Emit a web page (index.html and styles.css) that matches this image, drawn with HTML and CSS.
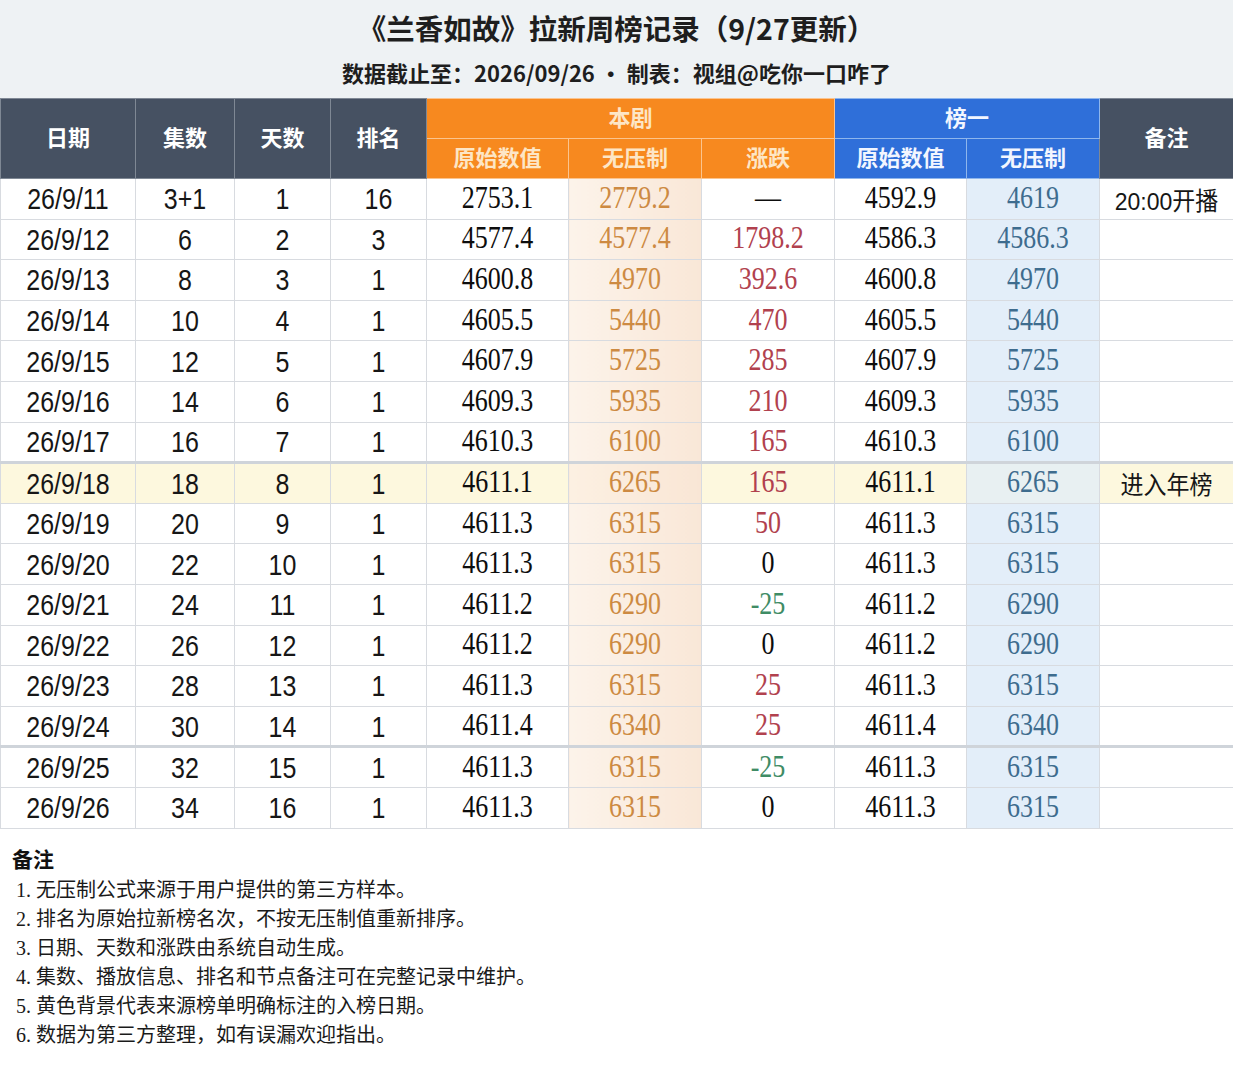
FILE: index.html
```html
<!DOCTYPE html>
<html lang="zh">
<head>
<meta charset="utf-8">
<link rel="stylesheet" href="styles.css">
</head>
<body>
<div class="page">
  <header class="head">
    <h1 class="title">《兰香如故》拉新周榜记录（9/27更新）</h1>
    <p class="sub">数据截止至：2026/09/26 · 制表：视组@吃你一口咋了</p>
  </header>
  <table class="grid">
    <colgroup>
      <col class="c-date"><col class="c-ep"><col class="c-day"><col class="c-rank">
      <col class="c-raw"><col class="c-unc"><col class="c-chg">
      <col class="c-raw2"><col class="c-unc2"><col class="c-note">
    </colgroup>
    <thead>
      <tr class="h1">
        <th rowspan="2" class="dark">日期</th>
        <th rowspan="2" class="dark">集数</th>
        <th rowspan="2" class="dark">天数</th>
        <th rowspan="2" class="dark">排名</th>
        <th colspan="3" class="orange">本剧</th>
        <th colspan="2" class="blue">榜一</th>
        <th rowspan="2" class="dark">备注</th>
      </tr>
      <tr class="h2">
        <th class="orange">原始数值</th>
        <th class="orange">无压制</th>
        <th class="orange">涨跌</th>
        <th class="blue">原始数值</th>
        <th class="blue">无压制</th>
      </tr>
    </thead>
    <tbody>
      <tr><td class="s"><span>26/9/11</span></td><td class="s"><span>3+1</span></td><td class="s"><span>1</span></td><td class="s"><span>16</span></td><td class="n"><span>2753.1</span></td><td class="n uo"><span>2779.2</span></td><td class="n"><span>—</span></td><td class="n"><span>4592.9</span></td><td class="n ub"><span>4619</span></td><td class="s note"><span>20:00开播</span></td></tr>
      <tr><td class="s"><span>26/9/12</span></td><td class="s"><span>6</span></td><td class="s"><span>2</span></td><td class="s"><span>3</span></td><td class="n"><span>4577.4</span></td><td class="n uo"><span>4577.4</span></td><td class="n up"><span>1798.2</span></td><td class="n"><span>4586.3</span></td><td class="n ub"><span>4586.3</span></td><td class="s note"></td></tr>
      <tr><td class="s"><span>26/9/13</span></td><td class="s"><span>8</span></td><td class="s"><span>3</span></td><td class="s"><span>1</span></td><td class="n"><span>4600.8</span></td><td class="n uo"><span>4970</span></td><td class="n up"><span>392.6</span></td><td class="n"><span>4600.8</span></td><td class="n ub"><span>4970</span></td><td class="s note"></td></tr>
      <tr><td class="s"><span>26/9/14</span></td><td class="s"><span>10</span></td><td class="s"><span>4</span></td><td class="s"><span>1</span></td><td class="n"><span>4605.5</span></td><td class="n uo"><span>5440</span></td><td class="n up"><span>470</span></td><td class="n"><span>4605.5</span></td><td class="n ub"><span>5440</span></td><td class="s note"></td></tr>
      <tr><td class="s"><span>26/9/15</span></td><td class="s"><span>12</span></td><td class="s"><span>5</span></td><td class="s"><span>1</span></td><td class="n"><span>4607.9</span></td><td class="n uo"><span>5725</span></td><td class="n up"><span>285</span></td><td class="n"><span>4607.9</span></td><td class="n ub"><span>5725</span></td><td class="s note"></td></tr>
      <tr><td class="s"><span>26/9/16</span></td><td class="s"><span>14</span></td><td class="s"><span>6</span></td><td class="s"><span>1</span></td><td class="n"><span>4609.3</span></td><td class="n uo"><span>5935</span></td><td class="n up"><span>210</span></td><td class="n"><span>4609.3</span></td><td class="n ub"><span>5935</span></td><td class="s note"></td></tr>
      <tr><td class="s"><span>26/9/17</span></td><td class="s"><span>16</span></td><td class="s"><span>7</span></td><td class="s"><span>1</span></td><td class="n"><span>4610.3</span></td><td class="n uo"><span>6100</span></td><td class="n up"><span>165</span></td><td class="n"><span>4610.3</span></td><td class="n ub"><span>6100</span></td><td class="s note"></td></tr>
      <tr class="sep hl"><td class="s"><span>26/9/18</span></td><td class="s"><span>18</span></td><td class="s"><span>8</span></td><td class="s"><span>1</span></td><td class="n"><span>4611.1</span></td><td class="n uo"><span>6265</span></td><td class="n up"><span>165</span></td><td class="n"><span>4611.1</span></td><td class="n ub"><span>6265</span></td><td class="s note"><span>进入年榜</span></td></tr>
      <tr><td class="s"><span>26/9/19</span></td><td class="s"><span>20</span></td><td class="s"><span>9</span></td><td class="s"><span>1</span></td><td class="n"><span>4611.3</span></td><td class="n uo"><span>6315</span></td><td class="n up"><span>50</span></td><td class="n"><span>4611.3</span></td><td class="n ub"><span>6315</span></td><td class="s note"></td></tr>
      <tr><td class="s"><span>26/9/20</span></td><td class="s"><span>22</span></td><td class="s"><span>10</span></td><td class="s"><span>1</span></td><td class="n"><span>4611.3</span></td><td class="n uo"><span>6315</span></td><td class="n"><span>0</span></td><td class="n"><span>4611.3</span></td><td class="n ub"><span>6315</span></td><td class="s note"></td></tr>
      <tr><td class="s"><span>26/9/21</span></td><td class="s"><span>24</span></td><td class="s"><span>11</span></td><td class="s"><span>1</span></td><td class="n"><span>4611.2</span></td><td class="n uo"><span>6290</span></td><td class="n down"><span>-25</span></td><td class="n"><span>4611.2</span></td><td class="n ub"><span>6290</span></td><td class="s note"></td></tr>
      <tr><td class="s"><span>26/9/22</span></td><td class="s"><span>26</span></td><td class="s"><span>12</span></td><td class="s"><span>1</span></td><td class="n"><span>4611.2</span></td><td class="n uo"><span>6290</span></td><td class="n"><span>0</span></td><td class="n"><span>4611.2</span></td><td class="n ub"><span>6290</span></td><td class="s note"></td></tr>
      <tr><td class="s"><span>26/9/23</span></td><td class="s"><span>28</span></td><td class="s"><span>13</span></td><td class="s"><span>1</span></td><td class="n"><span>4611.3</span></td><td class="n uo"><span>6315</span></td><td class="n up"><span>25</span></td><td class="n"><span>4611.3</span></td><td class="n ub"><span>6315</span></td><td class="s note"></td></tr>
      <tr><td class="s"><span>26/9/24</span></td><td class="s"><span>30</span></td><td class="s"><span>14</span></td><td class="s"><span>1</span></td><td class="n"><span>4611.4</span></td><td class="n uo"><span>6340</span></td><td class="n up"><span>25</span></td><td class="n"><span>4611.4</span></td><td class="n ub"><span>6340</span></td><td class="s note"></td></tr>
      <tr class="sep"><td class="s"><span>26/9/25</span></td><td class="s"><span>32</span></td><td class="s"><span>15</span></td><td class="s"><span>1</span></td><td class="n"><span>4611.3</span></td><td class="n uo"><span>6315</span></td><td class="n down"><span>-25</span></td><td class="n"><span>4611.3</span></td><td class="n ub"><span>6315</span></td><td class="s note"></td></tr>
      <tr><td class="s"><span>26/9/26</span></td><td class="s"><span>34</span></td><td class="s"><span>16</span></td><td class="s"><span>1</span></td><td class="n"><span>4611.3</span></td><td class="n uo"><span>6315</span></td><td class="n"><span>0</span></td><td class="n"><span>4611.3</span></td><td class="n ub"><span>6315</span></td><td class="s note"></td></tr>
    </tbody>
  </table>
  <section class="notes">
    <h2 class="notes-title">备注</h2>
    <ol class="notes-list">
      <li>无压制公式来源于用户提供的第三方样本。</li>
      <li>排名为原始拉新榜名次，不按无压制值重新排序。</li>
      <li>日期、天数和涨跌由系统自动生成。</li>
      <li>集数、播放信息、排名和节点备注可在完整记录中维护。</li>
      <li>黄色背景代表来源榜单明确标注的入榜日期。</li>
      <li>数据为第三方整理，如有误漏欢迎指出。</li>
    </ol>
  </section>
</div>
</body>
</html>
```

FILE: styles.css
```css
* { box-sizing: border-box; }
html, body { margin: 0; padding: 0; }
body {
  width: 1233px;
  height: 1080px;
  overflow: hidden;
  background: #ffffff;
  font-family: "Liberation Sans", "Noto Sans CJK SC", sans-serif;
  color: #151515;
}
.page { width: 1233px; }

.head {
  height: 98px;
  background: #eef2f4;
  display: flex;
  flex-direction: column;
  align-items: center;
  padding-top: 8px;
}
.title {
  margin: 0;
  font-family: "Noto Sans CJK SC", sans-serif;
  font-size: 28.5px;
  font-weight: 700;
  line-height: 40px;
  color: #1e1e1e;
}
.sub {
  margin: 9px 0 0;
  font-family: "Noto Sans CJK SC", sans-serif;
  font-size: 22px;
  font-weight: 700;
  line-height: 30px;
  color: #1e1e1e;
}

.grid {
  width: 1233px;
  border-collapse: collapse;
  table-layout: fixed;
}
.c-date { width: 135px; }
.c-ep { width: 99px; }
.c-day { width: 96px; }
.c-rank { width: 96px; }
.c-raw { width: 142px; }
.c-unc { width: 133px; }
.c-chg { width: 133px; }
.c-raw2 { width: 132px; }
.c-unc2 { width: 133px; }
.c-note { width: 134px; }

.grid th {
  font-family: "Noto Sans CJK SC", sans-serif;
  font-weight: 700;
  font-size: 22px;
  line-height: 1;
  height: 40px;
  padding: 0 0 5px;
  border: 1px solid #6c7686;
}
.grid th.dark { background: #465162; color: #ffffff; border-color: #7f8894; }
.grid th.orange { background: #f7891f; color: #fde6c6; border-color: #fbc48e; }
.grid th.blue { background: #2f6fd9; color: #f2f6ff; border-color: #8fb6ec; }

.grid td {
  height: 40.6px;
  padding: 0;
  text-align: center;
  border: 1px solid #d8dbe0;
  white-space: nowrap;
}
.grid td span {
  display: inline-block;
  transform: scaleY(1.18);
}
.grid td.s {
  font-family: "Liberation Sans", "Noto Sans CJK SC", sans-serif;
  font-size: 25px;
  color: #161616;
}
.grid td.n {
  font-family: "Liberation Serif", "Noto Serif CJK SC", serif;
  font-size: 26px;
  color: #0d0d0d;
}
.grid td.note { font-size: 23px; }
.grid td.note span { transform: scaleY(1.08); }
.grid td.uo {
  background: linear-gradient(90deg, #fcf3ea, #f9e7d7);
  color: #cd8a42;
}
.grid td.ub {
  background: #e3eef9;
  color: #3e6c8e;
}
.grid td.up { color: #b1414e; }
.grid td.down { color: #3f8c65; }

.grid tr.sep td { border-top: 3px solid #cfd4da; }
.grid tr.hl td { background: #fdf8de; }
.grid tr.hl td.uo { background: linear-gradient(90deg, #fcf0e2, #f9e6d5); }
.grid tr.hl td.ub { background: #e8f0f2; }

.notes {
  padding: 14px 12px 0;
}
.notes-title {
  margin: 0;
  font-family: "Noto Sans CJK SC", sans-serif;
  font-size: 21px;
  font-weight: 700;
  line-height: 30px;
  color: #111;
}
.notes-list {
  margin: 3px 0 0;
  padding: 0 0 0 24px;
  font-family: "Liberation Serif", "Noto Sans CJK SC", serif;
  font-size: 20px;
  line-height: 29px;
  color: #1a1a1a;
}
.notes-list li { padding-left: 0; }
```
